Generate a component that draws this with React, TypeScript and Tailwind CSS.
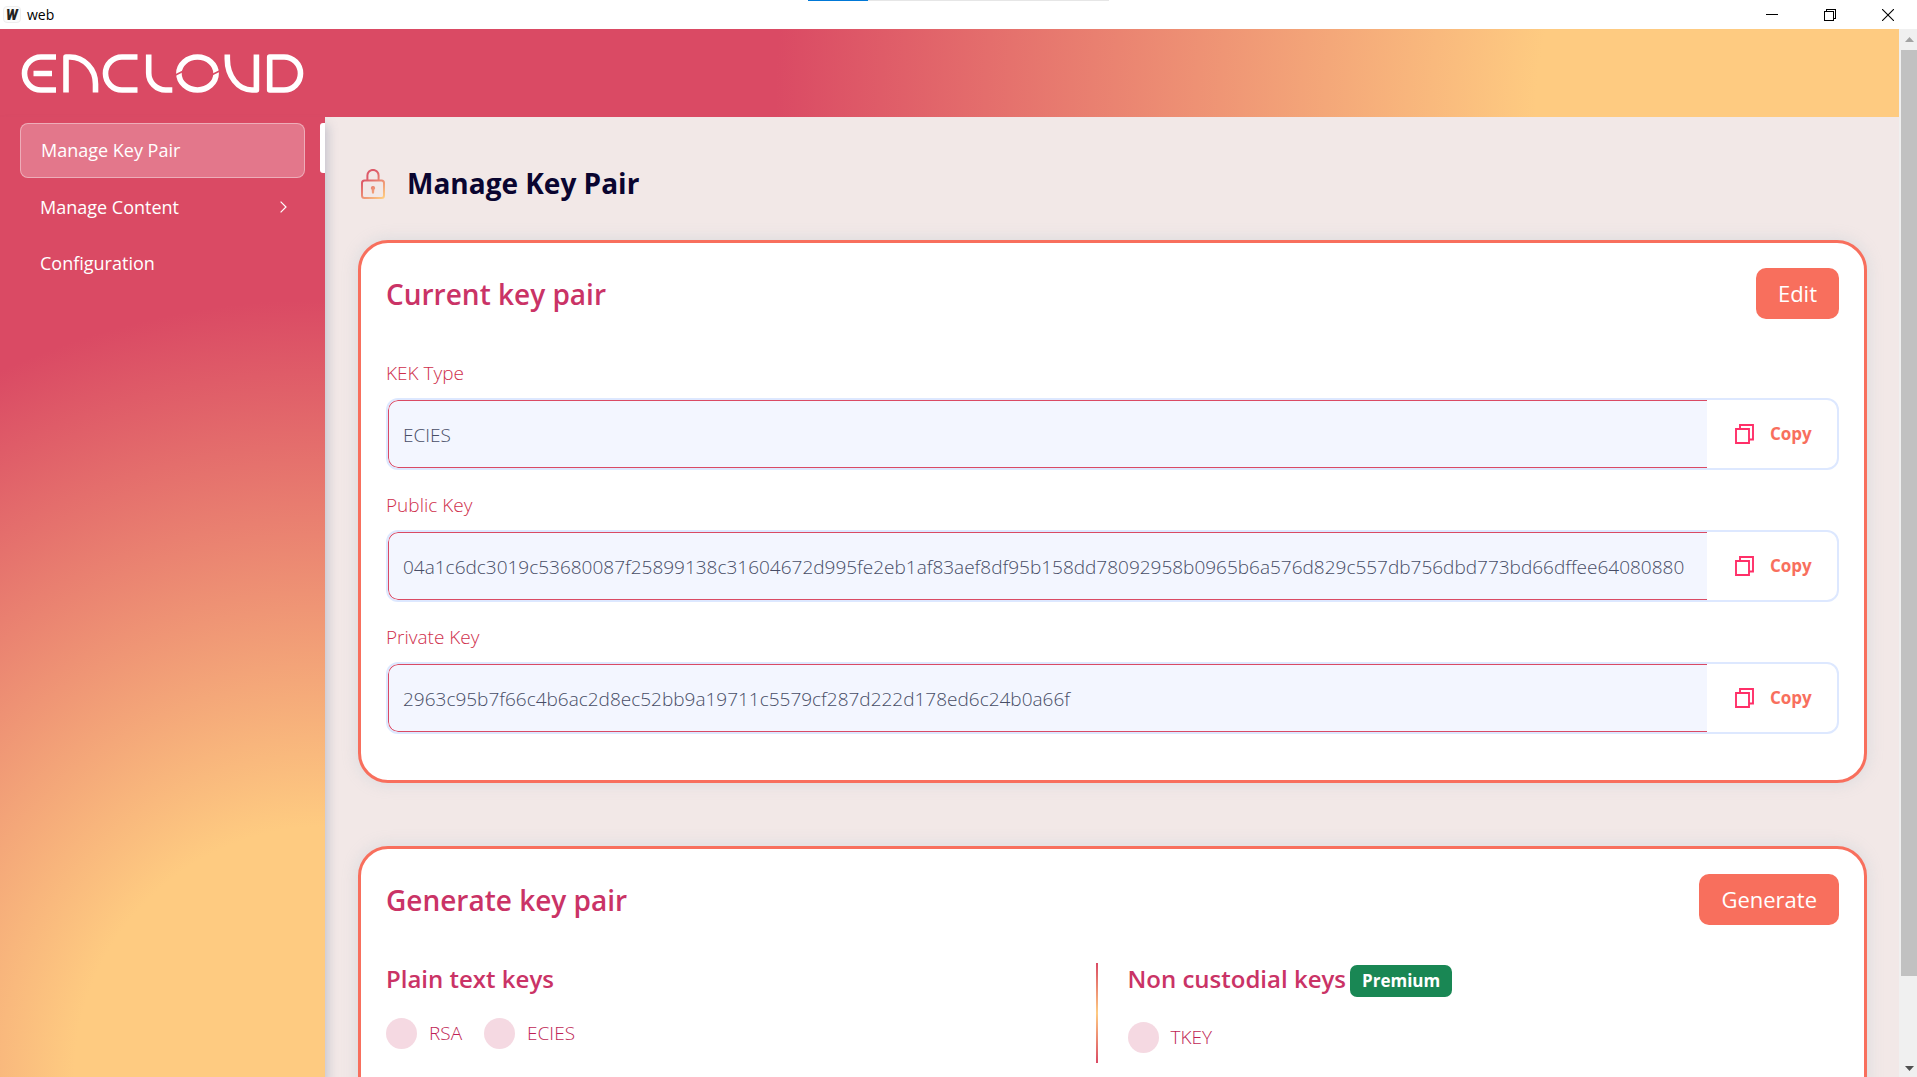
import React from "react";

const keyFields = [
  { id: "kek-type", label: "KEK Type", value: "ECIES" },
  {
    id: "public-key",
    label: "Public Key",
    value:
      "04a1c6dc3019c53680087f25899138c31604672d995fe2eb1af83aef8df95b158dd78092958b0965b6a576d829c557db756dbd773bd66dffee64080880",
  },
  {
    id: "private-key",
    label: "Private Key",
    value: "2963c95b7f66c4b6ac2d8ec52bb9a19711c5579cf287d222d178ed6c24b0a66f",
  },
];

function TitleBar() {
  return (
    <div className="relative flex h-[29px] shrink-0 items-center justify-between bg-white pl-[3px]">
      <div className="absolute inset-x-0 top-0 flex h-px justify-center">
        <div className="w-[60px] bg-[#0078d7]" />
        <div className="w-[241px] bg-[#e6e6e6]" />
      </div>
      <div className="flex items-center gap-[6px]">
        <span className="flex h-[17px] w-[18px] items-center justify-center rounded-sm border border-[#eeeeee] bg-[#fbfbfb] font-['Roboto',sans-serif] text-[14px] leading-none font-black text-[#222] italic">
          W
        </span>
        <span className="text-[14px] leading-5 text-black">web</span>
      </div>
      <div className="flex items-center">
        <button type="button" aria-label="Minimize" className="flex h-7 w-[58px] items-center justify-center">
          <svg width="12" height="12" viewBox="0 0 12 12" stroke="#000" fill="none" shapeRendering="crispEdges">
            <path d="M0 5.5H12" />
          </svg>
        </button>
        <button type="button" aria-label="Restore" className="flex h-7 w-[58px] items-center justify-center">
          <svg width="12" height="12" viewBox="0 0 12 12" stroke="#000" fill="none" shapeRendering="crispEdges">
            <path d="M0.5 2.5H9.5V11.5H0.5ZM2.5 2.5V0.5H11.5V9.5H9.5" />
          </svg>
        </button>
        <button type="button" aria-label="Close" className="flex h-7 w-[58px] items-center justify-center">
          <svg width="12" height="12" viewBox="0 0 12 12" stroke="#000" fill="none" strokeWidth="1.1">
            <path d="M0 0L12 12M12 0L0 12" />
          </svg>
        </button>
      </div>
    </div>
  );
}

function Logo() {
  return (
    <svg
      role="img"
      aria-label="Encloud"
      width="283"
      height="41"
      viewBox="21 53 283 41"
      fill="none"
      stroke="#fff"
      strokeWidth="5.6"
      strokeLinejoin="round"
    >
      <path d="M56 57H41A16.5 16.5 0 0 0 41 90H56M33.5 73.5H52" />
      <path d="M66 92.6V57H70A25.5 27 0 0 1 95.5 84V92.6" />
      <path d="M137.5 57H122A16.5 16.5 0 0 0 122 90H137.5" />
      <path d="M148.7 54.4V73A17 17 0 0 0 165.7 90H172.3" />
      <ellipse cx="197.5" cy="73.5" rx="18.6" ry="16.5" />
      <path d="M174.5 75.5L184.5 70.5M210.5 75.5L220.5 70.5" stroke="#da4a64" strokeWidth="1.6" />
      <path d="M227.3 54.4V59C227.3 76 238 90 252 90H256.4V54.4" />
      <path d="M269.7 57H284A16.5 16.5 0 0 1 284 90H269.7Z" />
    </svg>
  );
}

function LockIcon() {
  return (
    <svg width="24" height="30" viewBox="0 0 24 30" fill="none" aria-hidden="true">
      <defs>
        <linearGradient id="lock-gradient" x1="2" y1="4" x2="22" y2="29" gradientUnits="userSpaceOnUse">
          <stop offset="0.2" stopColor="#dd5a69" />
          <stop offset="1" stopColor="#fecb81" />
        </linearGradient>
      </defs>
      <g stroke="url(#lock-gradient)" strokeWidth="2">
        <path d="M6.4 11.5V6.5A5.6 5.6 0 0 1 17.6 6.5V11.5" />
        <rect x="1" y="11.5" width="22" height="17.5" rx="2.5" />
      </g>
      <path
        d="M12 17A2.1 2.1 0 0 1 13.3 20.8L13 24.5H11L10.7 20.8A2.1 2.1 0 0 1 12 17Z"
        fill="url(#lock-gradient)"
      />
    </svg>
  );
}

function CopyIcon() {
  return (
    <svg width="19" height="20" viewBox="0 0 19 20" fill="none" stroke="#ff2f68" strokeWidth="1.9" aria-hidden="true">
      <path d="M1 5H14V19H1Z" />
      <path d="M5 5V1H18V15.5H14" />
    </svg>
  );
}

function Sidebar() {
  return (
    <nav className="relative z-10 w-[325px] shrink-0 bg-[radial-gradient(circle_at_bottom_right,#fecb81_24.7%,#da4a64_76.7%)] px-5 pt-[6px] shadow-[3px_8px_10px_rgba(100,116,150,0.3)]">
      <span className="absolute top-[6px] right-0 h-[50px] w-[5px] rounded-l-[3px] bg-white" />
      <ul className="text-[18px] leading-7 text-white">
        <li>
          <a
            href="#key-pair"
            aria-current="page"
            className="flex h-[55px] items-center rounded-lg border border-white/40 bg-white/25 px-5 pb-[2px]"
          >
            Manage Key Pair
          </a>
        </li>
        <li className="mt-px">
          <a href="#content" className="flex h-14 items-center justify-between pr-[18px] pl-5">
            Manage Content
            <svg width="7" height="12" viewBox="0 0 7 12" fill="none" stroke="#fff" strokeWidth="1.2" aria-hidden="true">
              <path d="M0.6 0.6L6 6L0.6 11.4" />
            </svg>
          </a>
        </li>
        <li>
          <a href="#configuration" className="flex h-14 items-center px-5">
            Configuration
          </a>
        </li>
      </ul>
    </nav>
  );
}

function KeyField({ id, label, value }: { id: string; label: string; value: string }) {
  return (
    <div className="mb-5">
      <label htmlFor={id} className="mb-[10px] block text-[19px] leading-[30px] font-light text-[#cf2f4c]">
        {label}
      </label>
      <div className="flex h-[72px] overflow-hidden rounded-[12px] border-2 border-[#dde8ff] bg-white">
        <input
          id={id}
          type="text"
          readOnly
          defaultValue={value}
          className="min-w-0 flex-1 rounded-l-[10px] border-y border-l border-[#da4a64] bg-[#f3f6ff] px-[14px] pt-[2px] text-[19px] font-light text-[#474d66] outline-none"
        />
        <button
          type="button"
          className="flex w-[130px] items-center gap-4 pl-7 text-[17px] font-bold text-[#f86f5d]"
        >
          <CopyIcon />
          Copy
        </button>
      </div>
    </div>
  );
}

function Card({ title, action, children }: { title: string; action: string; children: React.ReactNode }) {
  return (
    <section className="rounded-[30px] border-[3px] border-[#f86f5d] bg-white p-[25px] shadow-[0_0_16px_rgba(160,185,200,0.3)]">
      <div className="flex items-center justify-between">
        <h2 className="text-[28px] leading-10 font-semibold text-[#ca3366]">{title}</h2>
        <button type="button" className="h-[51px] rounded-[10px] bg-[#f86f5d] px-[22px] text-[22px] text-white">
          {action}
        </button>
      </div>
      {children}
    </section>
  );
}

function KeyRadio({ label }: { label: string }) {
  return (
    <label className="flex items-center gap-3 text-[19px] leading-[31px] font-light text-[#c01f55]">
      <input
        type="radio"
        name="key-kind"
        className="size-[31px] appearance-none rounded-full bg-[#f5d9e2] checked:bg-[#ca3366]"
      />
      {label}
    </label>
  );
}

function ScrollBar() {
  return (
    <div className="flex w-[18px] shrink-0 flex-col items-end bg-[#f0f0f0]" aria-hidden="true">
      <div className="flex h-[21px] w-4 items-center justify-center">
        <svg width="9" height="5" viewBox="0 0 9 5" fill="#a3a3a3">
          <path d="M0 5L4.5 0L9 5Z" />
        </svg>
      </div>
      <div className="flex min-h-0 w-4 flex-1 flex-col">
        <div className="h-[91.7%] bg-[#c1c1c1]" />
      </div>
      <div className="flex h-[17px] w-4 items-center justify-center">
        <svg width="9" height="5" viewBox="0 0 9 5" fill="#505050">
          <path d="M0 0L4.5 5L9 0Z" />
        </svg>
      </div>
    </div>
  );
}

export default function App() {
  return (
    <div className="flex h-screen flex-col overflow-hidden font-['Open_Sans','Noto_Sans',sans-serif]">
      <TitleBar />
      <div className="flex min-h-0 flex-1">
        <div className="flex min-w-0 flex-1 flex-col">
          <header className="flex h-[88px] shrink-0 items-center bg-[radial-gradient(circle_at_bottom_right,#fecb81_19.1%,#da4a64_59.1%)] px-[21px]">
            <Logo />
          </header>
          <div className="flex min-h-0 flex-1">
            <Sidebar />
            <main className="min-w-0 flex-1 overflow-hidden bg-[#f2e8e7] pt-[46px] pr-8 pl-[33px]">
              <div className="mb-[35px] flex h-[42px] items-center gap-[22px] pl-[3px]">
                <LockIcon />
                <h1 className="pb-[2px] text-[28px] leading-10 font-bold text-[#0a0530]">Manage Key Pair</h1>
              </div>
              <div className="flex flex-col gap-[63px]">
                <Card title="Current key pair" action="Edit">
                  <div className="pt-[39px] pb-px">
                    {keyFields.map((field) => (
                      <KeyField key={field.id} {...field} />
                    ))}
                  </div>
                </Card>
                <Card title="Generate key pair" action="Generate">
                  <div className="grid grid-cols-2 gap-[30px] pt-[38px] pb-5">
                    <div className="relative h-[100px]">
                      <h3 className="mb-[23px] text-[24px] leading-8 font-semibold text-[#ca3366]">Plain text keys</h3>
                      <div className="flex gap-[22px]">
                        <KeyRadio label="RSA" />
                        <KeyRadio label="ECIES" />
                      </div>
                      <span className="absolute top-0 right-0 h-full w-[2px] bg-[linear-gradient(#da4a64,#fecb81,#da4a64)]" />
                    </div>
                    <div>
                      <div className="mb-[25px] flex items-start gap-1">
                        <h3 className="text-[24px] leading-8 font-semibold text-[#ca3366]">Non custodial keys</h3>
                        <span className="mt-[2px] rounded-[7px] bg-[#198754] px-3 text-[17px] leading-8 font-bold text-white">
                          Premium
                        </span>
                      </div>
                      <KeyRadio label="TKEY" />
                    </div>
                  </div>
                </Card>
              </div>
            </main>
          </div>
        </div>
        <ScrollBar />
      </div>
    </div>
  );
}
